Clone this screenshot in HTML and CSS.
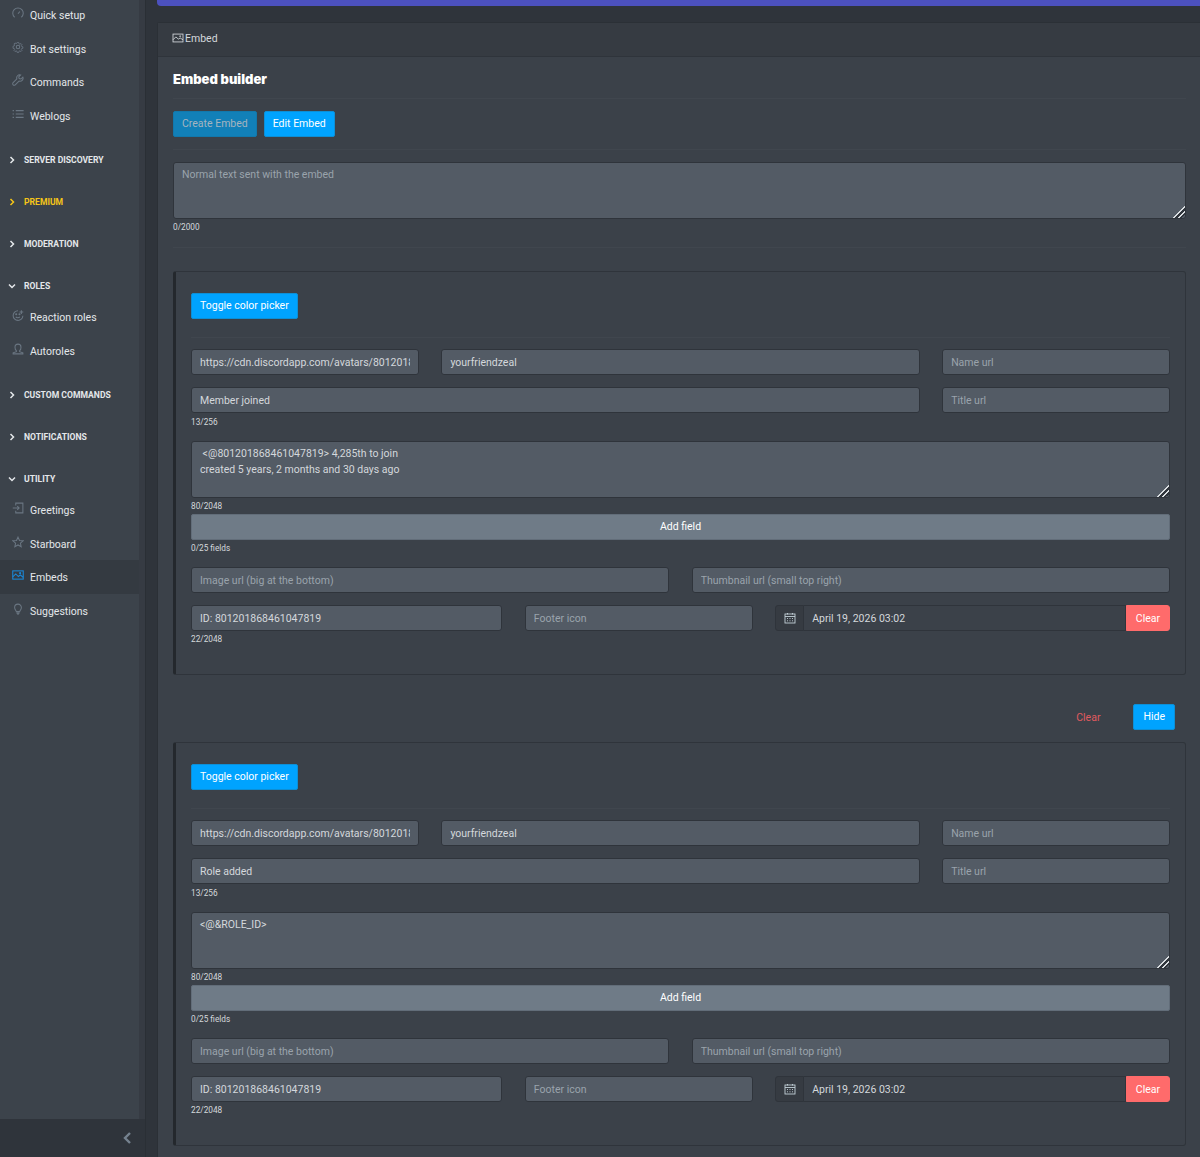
FILE: index.html
```html
<!DOCTYPE html>
<html lang="en">
<head>
    <meta charset="UTF-8">
    <title>Embed builder</title>
    <link rel="stylesheet" href="styles.css">
</head>
<body>
<div class="page">
    <aside class="sidebar">
        <nav class="nav">
            <div class="nav-group">
                <a class="nav-item"><svg class="ico" viewBox="0 0 16 16"><path d="M3.500 13.700A7 7 0 1 1 12.500 13.700"/><path d="M8 9l2.500-3"/></svg>Quick setup</a>
                <a class="nav-item"><svg class="ico" viewBox="0 0 16 16"><circle cx="8" cy="8" r="2.300"/><path d="M6.800 1h2.400l.4 2 1.500.7 1.800-1 1.600 1.700-1.100 1.700.7 1.500 1.900.4v2.400l-2 .4-.6 1.500 1.100 1.700-1.700 1.700-1.700-1.100-1.500.6-.4 2H6.800l-.4-2-1.500-.6-1.700 1.100-1.700-1.700 1.100-1.700-.6-1.500-2-.4V7l1.900-.4.7-1.500-1.100-1.700 1.600-1.700 1.800 1 1.500-.7z" transform="translate(1.400 1.200) scale(.82)"/></svg>Bot settings</a>
                <a class="nav-item"><svg class="ico" viewBox="0 0 16 16"><path d="M14.500 4.200l-2.600 2.500-2.300-.6-.6-2.300L11.500 1.300a4 4 0 0 0-5 5.200L1.500 11.600a1.900 1.900 0 0 0 2.800 2.800l5.100-5a4 4 0 0 0 5.100-5.200z"/></svg>Commands</a>
                <a class="nav-item"><svg class="ico" viewBox="0 0 16 16"><path d="M5 3.500h10.500M5 8h10.500M5 12.500h10.500M.8 3.500h1.800M.8 8h1.800M.8 12.500h1.800"/></svg>Weblogs</a>
            </div>
            <div class="nav-group">
                <div class="nav-head"><svg class="chev" viewBox="0 0 8 8"><path d="M2.500 1l3 3-3 3"/></svg>SERVER DISCOVERY</div>
            </div>
            <div class="nav-group">
                <div class="nav-head premium"><svg class="chev" viewBox="0 0 8 8"><path d="M2.500 1l3 3-3 3"/></svg>PREMIUM</div>
            </div>
            <div class="nav-group">
                <div class="nav-head"><svg class="chev" viewBox="0 0 8 8"><path d="M2.500 1l3 3-3 3"/></svg>MODERATION</div>
            </div>
            <div class="nav-group">
                <div class="nav-head"><svg class="chev" viewBox="0 0 8 8"><path d="M1 2.500l3 3 3-3"/></svg>ROLES</div>
                <a class="nav-item"><svg class="ico" viewBox="0 0 16 16"><path d="M14.500 9A6.500 6.500 0 1 1 8 2.200"/><circle cx="5.600" cy="7" r=".7"/><circle cx="10" cy="7" r=".7"/><path d="M5 10.500c1.500 1.600 4 1.600 5.500 0M12.500 1.500v5M10 4h5"/></svg>Reaction roles</a>
                <a class="nav-item"><svg class="ico" viewBox="0 0 16 16"><path d="M5.800 10.200C4.600 9.200 4 7.500 4 5.500a4 4 0 0 1 8 0c0 2-.6 3.700-1.800 4.700v1.300l4.300 1.500v1.500h-13V13l4.300-1.500z"/></svg>Autoroles</a>
            </div>
            <div class="nav-group">
                <div class="nav-head"><svg class="chev" viewBox="0 0 8 8"><path d="M2.500 1l3 3-3 3"/></svg>CUSTOM COMMANDS</div>
            </div>
            <div class="nav-group">
                <div class="nav-head"><svg class="chev" viewBox="0 0 8 8"><path d="M2.500 1l3 3-3 3"/></svg>NOTIFICATIONS</div>
            </div>
            <div class="nav-group">
                <div class="nav-head"><svg class="chev" viewBox="0 0 8 8"><path d="M1 2.500l3 3 3-3"/></svg>UTILITY</div>
                <a class="nav-item"><svg class="ico" viewBox="0 0 16 16"><path d="M5 4.500V1.500h9.500v13H5v-3M1 8h8.500M7 5.500L9.500 8 7 10.500"/></svg>Greetings</a>
                <a class="nav-item"><svg class="ico" viewBox="0 0 16 16"><path d="M8 1.500l2 4.400 4.800.5-3.600 3.200 1 4.700L8 11.900l-4.200 2.400 1-4.700L1.200 6.400 6 5.900z"/></svg>Starboard</a>
                <a class="nav-item active"><svg class="ico" viewBox="0 0 16 16"><rect x="1" y="2.500" width="14" height="11"/><path d="M1 10.500l4-4 3.500 3.500 2.500-2 4 3"/><circle cx="10.800" cy="5.500" r=".7"/></svg>Embeds</a>
                <a class="nav-item"><svg class="ico" viewBox="0 0 16 16"><path d="M5.800 11.500C5.500 9.800 3.500 8.800 3.500 6a4.500 4.500 0 0 1 9 0c0 2.800-2 3.800-2.300 5.500zM6 13.500h4M7 15h2"/></svg>Suggestions</a>
            </div>
        </nav>
        <div class="sidebar-foot"><svg class="collapse" viewBox="0 0 10 14"><path d="M8 2L3 7l5 5"/></svg></div>
    </aside>

    <main class="main">
        <div class="banner"></div>
        <section class="card">
            <div class="card-head"><svg class="head-ico" viewBox="0 0 16 14"><rect x="1" y="1.500" width="14" height="11"/><path d="M1 9.500l4-4 3.500 3 2.500-1.500 4 2.500"/><circle cx="11" cy="4.500" r=".7"/></svg>Embed</div>
            <div class="card-body">
                <h2 class="title">Embed builder</h2>
                <div class="tabs">
                    <button class="btn btn-off">Create Embed</button>
                    <button class="btn">Edit Embed</button>
                </div>
                <div class="message">
                    <textarea class="field area" placeholder="Normal text sent with the embed"></textarea>
                    <div class="count">0/2000</div>
                </div>

                <div class="panel">
                    <button class="btn">Toggle color picker</button>
                    <div class="grid first">
                        <input class="field s3" value="https://cdn.discordapp.com/avatars/801201868461047819/a1.png">
                        <input class="field s6" value="yourfriendzeal">
                        <input class="field s3" placeholder="Name url">
                        <div class="s9"><input class="field" value="Member joined"><div class="count">13/256</div></div>
                        <input class="field s3" placeholder="Title url">
                    </div>
                    <textarea class="field area desc"> &lt;@801201868461047819&gt; 4,285th to join
created 5 years, 2 months and 30 days ago</textarea>
                    <div class="count">80/2048</div>
                    <button class="btn-wide">Add field</button>
                    <div class="count">0/25 fields</div>
                    <div class="grid images">
                        <input class="field s6" placeholder="Image url (big at the bottom)">
                        <input class="field s6" placeholder="Thumbnail url (small top right)">
                        <div class="s4"><input class="field" value="ID: 801201868461047819"><div class="count">22/2048</div></div>
                        <input class="field s3" placeholder="Footer icon">
                        <div class="date s5">
                            <span class="date-ico"><svg viewBox="0 0 12 12"><rect x="1" y="2" width="10" height="9"/><path d="M1 4.500h10M3.500 1v1.500M8.500 1v1.500M3 6.500h1M5.500 6.500h1M8 6.500h1M3 8.800h1M5.500 8.800h1M8 8.800h1"/></svg></span>
                            <input class="date-input" value="April 19, 2026 03:02">
                            <button class="btn-clear">Clear</button>
                        </div>
                    </div>
                </div>

                <div class="panel-actions">
                    <a class="link-clear">Clear</a>
                    <button class="btn">Hide</button>
                </div>

                <div class="panel">
                    <button class="btn">Toggle color picker</button>
                    <div class="grid first">
                        <input class="field s3" value="https://cdn.discordapp.com/avatars/801201868461047819/a1.png">
                        <input class="field s6" value="yourfriendzeal">
                        <input class="field s3" placeholder="Name url">
                        <div class="s9"><input class="field" value="Role added"><div class="count">13/256</div></div>
                        <input class="field s3" placeholder="Title url">
                    </div>
                    <textarea class="field area desc">&lt;@&amp;ROLE_ID&gt;</textarea>
                    <div class="count">80/2048</div>
                    <button class="btn-wide">Add field</button>
                    <div class="count">0/25 fields</div>
                    <div class="grid images">
                        <input class="field s6" placeholder="Image url (big at the bottom)">
                        <input class="field s6" placeholder="Thumbnail url (small top right)">
                        <div class="s4"><input class="field" value="ID: 801201868461047819"><div class="count">22/2048</div></div>
                        <input class="field s3" placeholder="Footer icon">
                        <div class="date s5">
                            <span class="date-ico"><svg viewBox="0 0 12 12"><rect x="1" y="2" width="10" height="9"/><path d="M1 4.500h10M3.500 1v1.500M8.500 1v1.500M3 6.500h1M5.500 6.500h1M8 6.500h1M3 8.800h1M5.500 8.800h1M8 8.800h1"/></svg></span>
                            <input class="date-input" value="April 19, 2026 03:02">
                            <button class="btn-clear">Clear</button>
                        </div>
                    </div>
                </div>
            </div>
        </section>
    </main>
</div>
</body>
</html>
```
FILE: styles.css
```css
*{
    margin: 0;
    padding: 0;
    box-sizing: border-box;
}
html,body{
    height: 100%;
    overflow: hidden;
}
body{
    background: #2f343b;
    color: #d4d8dc;
    font-family: Roboto, "Liberation Sans", sans-serif;
    font-size: 10.5px;
}
.page{
    display: flex;
    height: 1157px;
}

/* sidebar */
.sidebar{
    display: flex;
    flex-direction: column;
    flex: 0 0 146px;
    border-right: 1px solid #2a2f35;
    background: #363b43;
}
.nav{
    flex: 1;
    width: 139px;
    margin-top: -2px;
    background: #3c434b;
}
.nav-group{
    padding-bottom: 5.5px;
}
.nav-item{
    display: flex;
    align-items: center;
    width: 139px;
    height: 33.5px;
    padding: 2px 0 0 12px;
    color: #e4e7ea;
    font-size: 10.5px;
}
.nav-item.active{
    background: #343a41;
}
.ico{
    flex: none;
    width: 12px;
    height: 12px;
    margin: -5px 6px 0 0;
    fill: none;
    stroke: #6a7682;
    stroke-width: 1.4;
}
.active .ico{
    stroke: #1b87d6;
}
.nav-head{
    display: flex;
    align-items: center;
    height: 36.5px;
    padding: 9px 0 0 8px;
    color: #e4e7ea;
    font-size: 8.6px;
    font-weight: 700;
}
.nav-head.premium{
    color: #f5c518;
}
.chev{
    flex: none;
    width: 8px;
    height: 8px;
    margin-right: 8px;
    fill: none;
    stroke: currentColor;
    stroke-width: 1.5;
}
.sidebar-foot{
    display: flex;
    align-items: center;
    justify-content: flex-end;
    height: 38px;
    padding-right: 13px;
    background: #2f343b;
}
.collapse{
    width: 10px;
    height: 14px;
    fill: none;
    stroke: #75828f;
    stroke-width: 2.4;
}

/* main column */
.main{
    flex: 1;
    min-width: 0;
    padding-left: 11px;
}
.banner{
    height: 6px;
    border-radius: 0 0 0 4px;
    background: #4c51bf;
}
.card{
    margin-top: 16px;
    border-top: 1px solid #2b3036;
    border-left: 1px solid #2b3036;
    border-radius: 3px 0 0 0;
    background: #3b4149;
}
.card-head{
    display: flex;
    align-items: center;
    height: 34px;
    padding: 0 0 2px 14px;
    border-bottom: 1px solid #2f343b;
    background: #363b42;
    font-size: 10.5px;
}
.head-ico{
    width: 12px;
    height: 10px;
    margin: -2px 1px 0 0;
    fill: none;
    stroke: #d4d8dc;
    stroke-width: 1.2;
}
.card-body{
    padding: 0 14px 40px 15px;
}
.title{
    height: 42px;
    padding-top: 13px;
    border-bottom: 1px solid #40464e;
    color: #fff;
    font-family: Inter, "Open Sans", sans-serif;
    font-size: 13px;
    font-weight: 900;
    line-height: 18px;
}
.tabs{
    display: flex;
    gap: 7px;
    padding: 12px 0;
    border-bottom: 1px solid #40464e;
}
.btn{
    height: 26px;
    padding: 0 8px 2px;
    border: 1px solid #0d8fd6;
    border-radius: 2px;
    background: #00a3ff;
    color: #fff;
    font: 10.5px Roboto, sans-serif;
}
.btn-off{
    border-color: #1278ac;
    background: #1280b8;
    color: #a5b4bf;
}
.message{
    padding: 12px 0;
    border-bottom: 1px solid #40464e;
}
.field{
    display: block;
    width: 100%;
    height: 26px;
    padding: 0 8px;
    border: 1px solid #2f343b;
    border-radius: 3px;
    outline: none;
    background: #535b65;
    color: #d4d8dc;
    font: 10.5px Roboto, sans-serif;
}
.field::placeholder{
    color: #9aa3ac;
    opacity: 1;
}
.area{
    height: 57px;
    padding: 4px 8px;
    line-height: 16px;
}
.area::-webkit-resizer{
    background: linear-gradient(135deg, transparent 0 58%, #d8dcdf 58% 66%, #2f343b 66% 74%, #d8dcdf 74% 82%, #2f343b 82% 90%, transparent 90%);
}
.count{
    height: 16px;
    color: #d4d8dc;
    font-size: 8.25px;
    line-height: 17px;
}
.s9 .count{
    line-height: 18px;
}
.panel{
    margin-top: 23px;
    padding: 21px 15px 27px 15px;
    border: 1px solid #2f343b;
    border-left: 3px solid #24282d;
    border-radius: 3px;
}
.panel .btn{
    display: block;
    margin-bottom: 18px;
}
.panel-actions{
    display: flex;
    align-items: center;
    justify-content: flex-end;
    height: 26px;
    margin-top: 29px;
    margin-right: 11px;
    gap: 33px;
}
.panel-actions + .panel{
    margin-top: 12px;
}
.panel-actions .btn{
    margin: 0;
    padding: 0 9px 2px;
}
.link-clear{
    color: #e05a5f;
    font-size: 10.5px;
}
.grid{
    display: grid;
    grid-template-columns: repeat(12, 1fr);
    column-gap: 22.5px;
}
.first{
    padding-top: 11px;
    border-top: 1px solid #40464e;
    row-gap: 12px;
}
.images{
    margin-top: 11px;
    row-gap: 12px;
}
.s3{ grid-column: span 3; }
.s4{ grid-column: span 4; }
.s5{ grid-column: span 5; }
.s6{ grid-column: span 6; }
.s9{ grid-column: span 9; }
.desc{
    margin-top: 12px;
}
.btn-wide{
    display: block;
    width: 100%;
    height: 26px;
    padding-bottom: 2px;
    border: 1px solid #626d79;
    border-radius: 2px;
    background: #6f7b87;
    color: #fff;
    font: 10.5px Roboto, sans-serif;
}
.date{
    display: flex;
    height: 26px;
}
.date-ico{
    display: flex;
    flex: 0 0 29px;
    align-items: center;
    justify-content: center;
    border: 1px solid #2f343b;
    border-radius: 3px 0 0 3px;
    background: #363b42;
}
.date-ico svg{
    width: 12px;
    height: 12px;
    fill: none;
    stroke: #c3d0d8;
    stroke-width: .9;
}
.date-input{
    flex: 1;
    min-width: 0;
    padding: 0 8px;
    border: 1px solid #2f343b;
    border-left: 0;
    outline: none;
    background: #3b4149;
    color: #d4d8dc;
    font: 10.5px Roboto, sans-serif;
}
.btn-clear{
    flex: 0 0 44px;
    border: 1px solid #ff6b6b;
    border-radius: 0 3px 3px 0;
    background: #ff6b6b;
    color: #fff;
    font: 10.5px Roboto, sans-serif;
}
```
